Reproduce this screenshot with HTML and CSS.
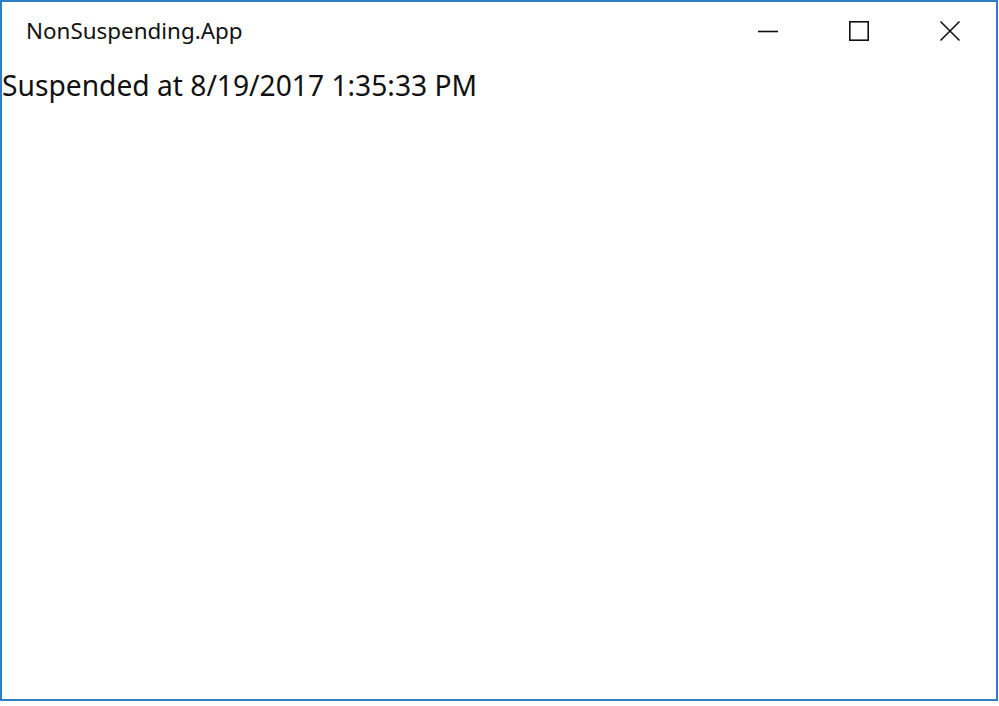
FILE: index.html
```html
<!DOCTYPE html>
<html>
<head>
<meta charset="utf-8">
<link rel="stylesheet" href="styles.css">
</head>
<body>
<div class="window">
  <div class="titlebar">
    <div class="title">NonSuspending.App</div>
    <div class="controls">
      <div class="btn"><svg width="22" height="22" viewBox="0 0 22 22"><path d="M1 11.5H21" stroke="#111" stroke-width="1.6" fill="none"/></svg></div>
      <div class="btn"><svg width="22" height="22" viewBox="0 0 22 22"><rect x="1.8" y="1.8" width="18.4" height="18.4" stroke="#111" stroke-width="1.6" fill="none"/></svg></div>
      <div class="btn"><svg width="22" height="22" viewBox="0 0 22 22"><path d="M1.5 1.5L20.5 20.5M20.5 1.5L1.5 20.5" stroke="#111" stroke-width="1.6" fill="none"/></svg></div>
    </div>
  </div>
  <div class="content">Suspended at 8/19/2017 1:35:33 PM</div>
</div>
</body>
</html>
```
FILE: styles.css
```css
html, body {
  margin: 0;
  padding: 0;
  background: #fff;
}
body {
  width: 999px;
  height: 706px;
  font-family: "Noto Sans", "Open Sans", sans-serif;
  color: #111;
}
.window {
  box-sizing: border-box;
  width: 998px;
  height: 701px;
  border: 2px solid #2f7ec4;
  background: #fff;
  display: flex;
  flex-direction: column;
}
.titlebar {
  height: 66px;
  display: flex;
  align-items: flex-start;
  justify-content: space-between;
}
.title {
  font-size: 22.4px;
  margin-left: 24px;
  margin-top: 15px;
  line-height: 28px;
}
.controls {
  display: flex;
  margin-top: 18px;
  margin-right: 35px;
  gap: 69px;
}
.btn {
  width: 22px;
  height: 22px;
}
.btn svg { display: block; }
.content {
  font-size: 28.2px;
  line-height: 34px;
  margin-left: 0;
}
```
